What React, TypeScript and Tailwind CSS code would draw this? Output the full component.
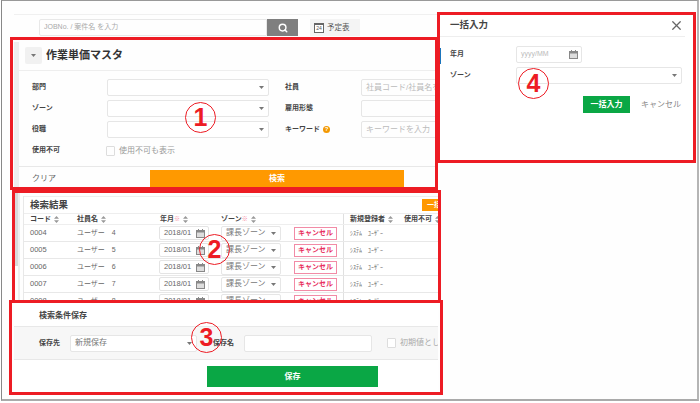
import { Search, X } from "lucide-react";

const Caret = () => (
  <svg width="5" height="3" viewBox="0 0 5 3" className="shrink-0">
    <path d="M0 0h5L2.5 3z" fill="#777" />
  </svg>
);

const Sort = () => (
  <svg width="5" height="7" viewBox="0 0 5 7" className="ml-[3px] shrink-0">
    <path d="M2.5 0 5 2.7H0zM2.5 7 0 4.3h5z" fill="#999" />
  </svg>
);

const Cal = () => (
  <svg width="9" height="9" viewBox="0 0 9 9" className="shrink-0">
    <rect x="0.5" y="1.5" width="8" height="7" fill="#ddd" stroke="#888" />
    <rect x="0.5" y="1.5" width="8" height="2" fill="#888" />
    <path d="M2.5 0v2M6.5 0v2" stroke="#888" />
  </svg>
);

const Select = ({ w, h = "h-[17px]", text = "" }: { w: string; h?: string; text?: string }) => (
  <div className={`${w} ${h} flex shrink-0 items-center justify-between rounded-[2px] border border-[#e6e6e6] bg-white pr-[4px] pl-[4px] text-[8px] text-[#777]`}>
    <span>{text}</span>
    <Caret />
  </div>
);

const FormRow = ({ label, right, placeholder, help }: { label: string; right: string; placeholder: string; help?: boolean }) => (
  <div className="flex h-[17px] items-center">
    <div className="w-[76px] shrink-0 pl-[1px] text-[7px] font-bold text-[#444]">{label}</div>
    <Select w="w-[162px]" />
    <div className="ml-[16px] flex w-[76px] shrink-0 items-center text-[7px] font-bold text-[#444]">
      {right}
      {help && (
        <span className="ml-[3px] flex h-[7px] w-[7px] items-center justify-center rounded-full bg-[#f39800] text-[6px] text-white">?</span>
      )}
    </div>
    <div className="flex h-[17px] w-[90px] shrink-0 items-center rounded-[2px] border border-[#e6e6e6] pl-[4px] text-[8px] whitespace-nowrap text-[#bbb]">
      {placeholder}
    </div>
  </div>
);

const rows = [
  ["0004", "ユーザー　4"],
  ["0005", "ユーザー　5"],
  ["0006", "ユーザー　6"],
  ["0007", "ユーザー　7"],
  ["0008", "ユーザー　8"],
];

const TableRow = ({ code, name }: { code: string; name: string }) => (
  <div className="flex h-[17px] shrink-0 items-center border-b border-[#e8e8e8] text-[7.5px] text-[#666]">
    <div className="w-[53px] shrink-0 pl-[6px]">{code}</div>
    <div className="w-[82px] shrink-0 text-[7px]">{name}</div>
    <div className="w-[62px] shrink-0">
      <div className="flex h-[14px] w-[50px] items-center justify-between rounded-[2px] border border-[#e4e4e4] pr-[3px] pl-[4px] text-[7.5px]">
        2018/01
        <Cal />
      </div>
    </div>
    <div className="w-[73px] shrink-0">
      <Select w="w-[60px]" h="h-[15px]" text="課長ゾーン" />
    </div>
    <div className="w-[49px] shrink-0">
      <div className="flex h-[13px] w-[43px] items-center justify-center border border-[#f28ba6] text-[7px] font-bold whitespace-nowrap text-[#e8305f]">
        キャンセル
      </div>
    </div>
    <div className="flex h-full shrink-0 items-center border-l border-[#e0e0e0] pl-[6px] text-[6px] whitespace-nowrap">
      ｼｽﾃﾑ　ﾕｰｻﾞｰ
    </div>
  </div>
);

const Circle = ({ n, pos }: { n: string; pos: string }) => (
  <div className={`absolute ${pos} flex h-[31px] w-[31px] items-center justify-center rounded-full border border-[#ed1c24] text-[25px] leading-none font-bold text-[#ed1c24]`}>
    {n}
  </div>
);

export default function App() {
  return (
    <div className="relative h-[403px] w-[700px] overflow-hidden bg-white font-['Liberation_Sans','Noto_Sans_CJK_JP',sans-serif]">
      <div className="ml-px h-[401px] w-[698px] overflow-hidden border-t border-r-2 border-b-2 border-l border-t-[#999] border-r-[#b5b5b5] border-b-[#aaa] border-l-[#888] bg-[#fefefe]">
        <main className="ml-[12px] flex h-full w-[424px] flex-col overflow-hidden">
          {/* top search bar */}
          <div className="h-[36px] shrink-0 pt-[13px]">
            <div className="h-px bg-[#f0f0f0]" />
            <div className="mt-[4px] flex h-[17px] items-center pl-[25px]">
              <div className="flex h-[17px] w-[228px] shrink-0 items-center rounded-l-[2px] border border-[#e8e8e8] pl-[4px] text-[7px] text-[#aaa]">
                JOBNo. / 案件名 を入力
              </div>
              <div className="flex h-[17px] w-[31px] shrink-0 items-center justify-center bg-[#7f7f7f]">
                <Search size={10} strokeWidth={3.5} color="#fff" />
              </div>
              <div className="ml-[12px] flex h-[17px] w-[50px] shrink-0 items-center gap-[3px] bg-[#f4f4f4] pl-[4px] text-[7.5px] text-[#555]">
                <span className="flex h-[10px] w-[10px] items-end justify-center border border-t-2 border-[#666] bg-white text-[5px] leading-[7px]">24</span>
                予定表
              </div>
            </div>
          </div>

          {/* panel 1 */}
          <section className="flex h-[153px] shrink-0">
            <div className="mt-[5px] w-[5px] shrink-0 bg-[#eee]" />
            <div className="flex min-w-0 flex-1 flex-col">
              <div className="flex h-[34px] shrink-0 items-end border-b border-[#eee] pb-[6px] pl-[6px]">
                <div className="flex h-[17px] w-[17px] items-center justify-center rounded-[2px] bg-[#f1f1f1]">
                  <Caret />
                </div>
                <h1 className="ml-[4px] text-[11px] leading-[17px] font-bold whitespace-nowrap text-[#333]">作業単価マスタ</h1>
              </div>
              <div className="flex flex-col gap-[4px] pt-[8px] pl-[12px]">
                <FormRow label="部門" right="社員" placeholder="社員コード/社員名を入力" />
                <FormRow label="ゾーン" right="雇用形態" placeholder="" />
                <FormRow label="役職" right="キーワード" placeholder="キーワードを入力" help />
                <div className="flex h-[17px] items-center">
                  <div className="w-[75px] shrink-0 pl-px text-[7px] font-bold text-[#444]">使用不可</div>
                  <span className="h-[10px] w-[9px] shrink-0 rounded-[1px] border border-[#ddd]" />
                  <span className="ml-[4px] text-[8px] text-[#999]">使用不可も表示</span>
                </div>
              </div>
              <div className="mt-[7px] flex h-[24px] items-center border-t border-[#e8e8e8] pr-[14px] pl-[13px]">
                <span className="w-[118px] shrink-0 text-[8px] text-[#666]">クリア</span>
                <div className="flex h-[17px] w-[254px] shrink-0 items-center justify-center bg-[#ff9900] text-[8px] font-bold text-white">
                  検索
                </div>
              </div>
            </div>
          </section>

          {/* panel 2 */}
          <section className="flex h-[111px] shrink-0 overflow-hidden">
            <div className="flex w-[9px] shrink-0">
              <div className="h-[76px] w-[4px] bg-[#d9d9d9]" />
              <div className="w-[2px] bg-[#eee]" />
            </div>
            <div className="mt-[6px] flex min-w-0 flex-1 flex-col overflow-hidden border-l border-[#e8e8e8] bg-white">
              <div className="flex h-[17px] shrink-0 items-center justify-between border-t border-[#eee] pl-[6px]">
                <span className="text-[9.5px] font-bold text-[#444]">検索結果</span>
                <span className="flex h-[12px] w-[16px] shrink-0 items-center overflow-hidden bg-[#ff9900] pl-[5px] text-[7px] font-bold whitespace-nowrap text-white">一括</span>
              </div>
              <div className="flex h-[12px] shrink-0 items-center border-y border-[#eee] text-[7px] font-bold text-[#444]">
                <div className="flex w-[53px] shrink-0 items-center pl-[6px]">コード<Sort /></div>
                <div className="flex w-[83px] shrink-0 items-center">社員名<Sort /></div>
                <div className="flex w-[61px] shrink-0 items-center">年月<span className="text-[6px] text-[#f58aa0]">※</span><Sort /></div>
                <div className="flex w-[122px] shrink-0 items-center">ゾーン<span className="text-[6px] text-[#f58aa0]">※</span><Sort /></div>
                <div className="flex h-full w-[61px] shrink-0 items-center border-l border-[#e0e0e0] pl-[6px]">新規登録者<Sort /></div>
                <div className="flex shrink-0 items-center whitespace-nowrap">使用不可<Sort /></div>
              </div>
              {rows.map(([code, name]) => (
                <TableRow key={code} code={code} name={name} />
              ))}
            </div>
          </section>

          {/* panel 3 */}
          <section className="flex flex-1 flex-col bg-white">
            <h2 className="pt-[9px] pl-[25px] text-[8px] leading-[12px] font-bold text-[#444]">検索条件保存</h2>
            <div className="mt-[4px] flex h-[34px] shrink-0 items-center border-y border-[#e8e8e8] bg-[#f7f7f7] pl-[25px]">
              <span className="w-[31px] shrink-0 text-[7px] font-bold text-[#444]">保存先</span>
              <Select w="w-[127px]" text="新規保存" />
              <span className="ml-[16px] w-[31px] shrink-0 text-[7px] font-bold text-[#444]">保存名</span>
              <div className="h-[17px] w-[128px] shrink-0 rounded-[2px] border border-[#e6e6e6] bg-white" />
              <span className="ml-[15px] h-[10px] w-[9px] shrink-0 rounded-[1px] border border-[#ddd] bg-white" />
              <span className="ml-[4px] shrink-0 text-[8px] whitespace-nowrap text-[#aaa]">初期値として保存</span>
            </div>
            <div className="flex pt-[6px] pl-[193px]">
              <div className="flex h-[21px] w-[171px] shrink-0 items-center justify-center bg-[#0aa745] text-[8px] font-bold text-white">
                保存
              </div>
            </div>
          </section>
        </main>
      </div>

      {/* dialog */}
      <aside className="absolute top-[12px] left-[437px] flex h-[151px] w-[259px] flex-col bg-white pl-[3px]">
        <div className="mt-[3px] flex h-[22px] w-[245px] shrink-0 items-center justify-between border-b border-[#eee] pr-[1px] pl-[10px]">
          <span className="text-[9.5px] font-bold text-[#444]">一括入力</span>
          <X size={15} strokeWidth={2} color="#666" />
        </div>
        <div className="relative flex flex-col gap-[4px] pt-[9px] pl-[10px]">
          <div className="absolute top-[11px] left-[-1px] h-[16px] w-[2px] bg-[#1b75bc]" />
          <div className="flex h-[17px] items-center">
            <span className="w-[66px] shrink-0 text-[7px] font-bold text-[#444]">年月</span>
            <div className="flex h-[17px] w-[66px] shrink-0 items-center justify-between rounded-[2px] border border-[#e6e6e6] pr-[3px] pl-[4px] text-[7px] text-[#bbb]">
              yyyy/MM
              <Cal />
            </div>
          </div>
          <div className="flex h-[17px] items-center">
            <span className="w-[66px] shrink-0 text-[7px] font-bold text-[#444]">ゾーン</span>
            <Select w="w-[166px]" />
          </div>
        </div>
        <div className="flex items-center pt-[12px] pl-[143px]">
          <div className="flex h-[17px] w-[47px] shrink-0 items-center justify-center bg-[#0aa745] text-[8px] font-bold text-white">
            一括入力
          </div>
          <span className="ml-[11px] text-[8px] text-[#888]">キャンセル</span>
        </div>
      </aside>

      {/* annotations */}
      <div className="absolute top-[37px] left-[10px] h-[153px] w-[428px] border-[3px] border-[#ed1c24]" />
      <div className="absolute top-[190px] left-[12px] h-[113px] w-[429px] border-[3px] border-[#ed1c24]" />
      <div className="absolute top-[300px] left-[9px] h-[95px] w-[434px] border-[3px] border-[#ed1c24]" />
      <div className="absolute top-[12px] left-[437px] h-[151px] w-[259px] border-[3px] border-[#ed1c24]" />
      <Circle n="1" pos="top-[102px] left-[185px]" />
      <Circle n="2" pos="top-[234px] left-[199px]" />
      <Circle n="3" pos="top-[322px] left-[191px]" />
      <Circle n="4" pos="top-[68px] left-[518px]" />
    </div>
  );
}
